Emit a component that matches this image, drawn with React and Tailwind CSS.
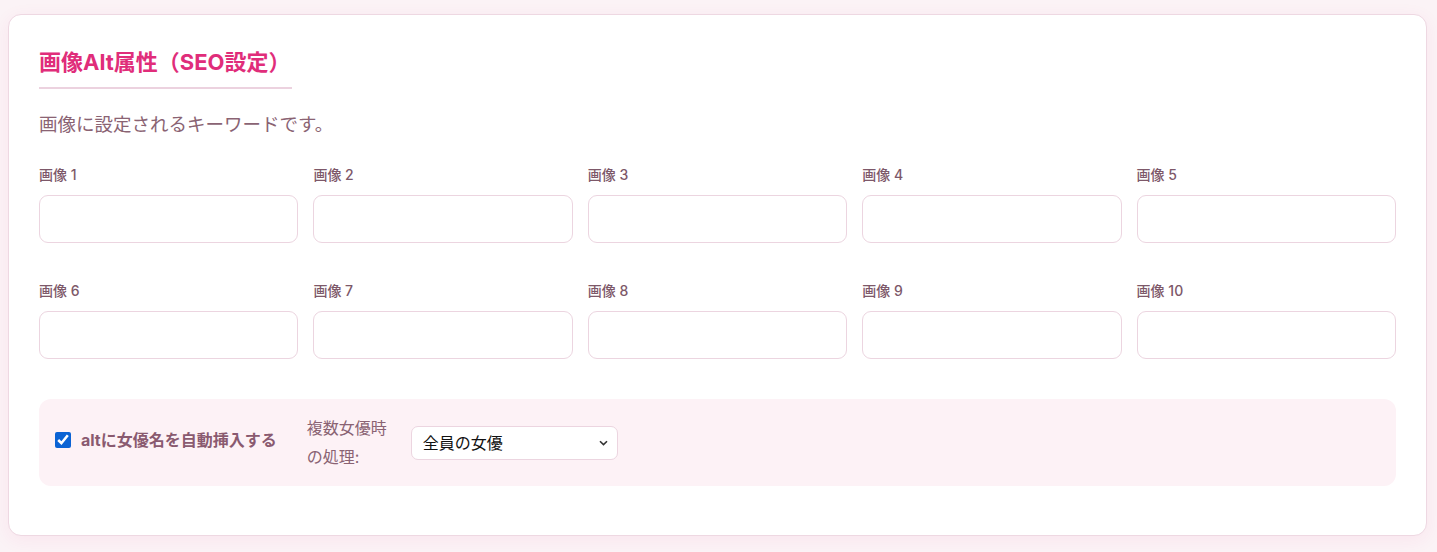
import React from "react";

const fields = Array.from({ length: 10 }, (_, i) => `画像 ${i + 1}`);

export default function App() {
  return (
    <div className="min-h-[552px] bg-[#fbf3f6] pt-[14px] pl-2 pr-[10px] pb-4 font-['Inter','Noto_Sans_CJK_JP',sans-serif]">
      <div className="rounded-[13px] border border-[#eed8e2] bg-white px-[30px] pt-[32px] pb-[49px] shadow-[0_4px_18px_rgba(224,48,122,0.07)]">
        <h2 className="inline-block border-b-2 border-[#ecd2df] pb-[10px] pr-[1px] text-[22px] font-bold leading-[30px] text-[#e02d7a]">
          画像Alt属性（SEO設定）
        </h2>
        <p className="mt-[22px] text-[18.5px] leading-[27px] text-[#8a6373]">
          画像に設定されるキーワードです。
        </p>
        <div className="mt-[27px] grid grid-cols-5 gap-x-[15px] gap-y-[38px]">
          {fields.map((f) => (
            <div key={f} className="flex flex-col">
              <label className="mb-[10px] text-[14px] font-medium leading-[20px] text-[#7d5869]">
                {f}
              </label>
              <input
                type="text"
                className="h-[48px] w-full rounded-[9px] border border-[#ecd5e0] bg-white px-3 text-[15px] outline-none"
              />
            </div>
          ))}
        </div>
        <div className="mt-[40px] flex items-center rounded-[12px] bg-[#fdf2f6] pl-4 pr-4 pt-[15px] pb-[14px]">
          <label className="mb-[7px] flex items-center gap-[10px] text-[16px] font-bold leading-[22px] text-[#8a5a70]">
            <input
              type="checkbox"
              defaultChecked
              className="m-0 h-4 w-4 accent-[#0b63d4]"
            />
            altに女優名を自動挿入する
          </label>
          <div className="ml-[30px] w-[80px] shrink-0 text-[16px] leading-[29px] text-[#8a6373]">
            複数女優時の処理:
          </div>
          <div className="relative ml-[24px] w-[207px]">
            <select className="h-[34px] w-full appearance-none rounded-[7px] border border-[#ecd5e0] bg-white pl-[11px] pr-[28px] text-[16px] text-[#111111] outline-none">
              <option>全員の女優</option>
              <option>最初の女優</option>
            </select>
            <svg
              className="pointer-events-none absolute right-[10px] top-[14px]"
              width="9"
              height="6"
              viewBox="0 0 9 6"
              fill="none"
            >
              <path d="M1 1.2L4.5 4.6L8 1.2" stroke="#333333" strokeWidth="1.6" />
            </svg>
          </div>
        </div>
      </div>
    </div>
  );
}
